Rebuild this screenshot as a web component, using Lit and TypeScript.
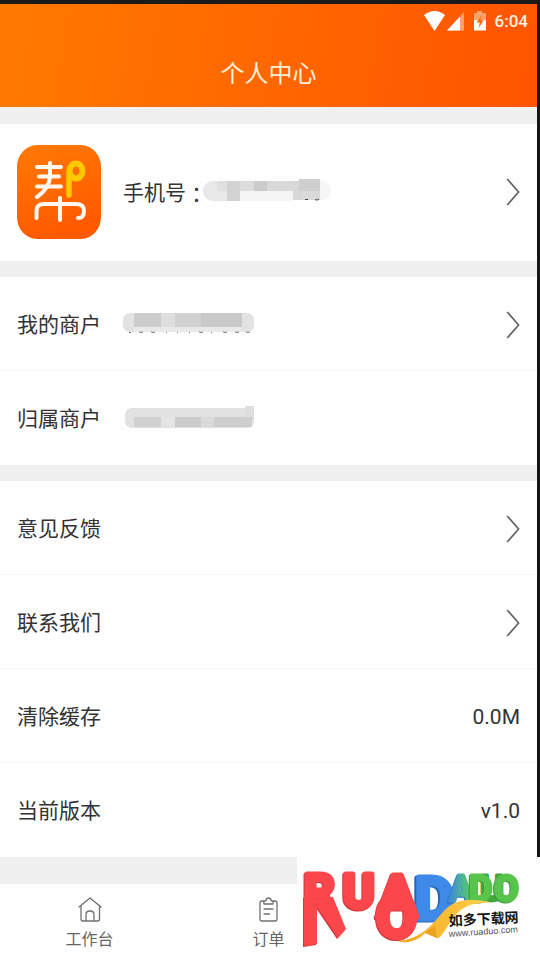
import { LitElement, html, css, svg, nothing } from "lit";
import { customElement } from "lit/decorators.js";

const chevron = html`<svg class="chevron" viewBox="0 0 14 28" width="14" height="28" aria-hidden="true">
  <path d="M1.2 1L12.6 14L1.2 27" fill="none" stroke="#666" stroke-width="1.7" />
</svg>`;

/** [x, y, width, height, grey] */
type Block = [number, number, number, number, string];

const blocks = (list: Block[]) =>
  list.map(([x, y, w, h, c]) => svg`<rect x=${x} y=${y} width=${w} height=${h} fill=${c} />`);

const phoneMask = html`<svg class="mask phone" viewBox="0 0 128 28" width="128" height="28" role="img" aria-label="已隐藏">
  <rect x="0" y="3" width="128" height="19" rx="9" fill="#f6f6f6" />
  <rect x="0" y="3" width="60" height="20" rx="10" fill="#e8e8e8" />
  ${blocks([
    [14, 3, 10, 10, "#dfdfdf"],
    [24, 3, 13, 20, "#d2d2d2"],
    [37, 3, 14, 10, "#dcdcdc"],
    [51, 3, 13, 10, "#cbcbcb"],
    [64, 3, 27, 10, "#d9d9d9"],
    [37, 13, 53, 10, "#f5f5f5"],
    [90, 3, 9, 19, "#d8d8d8"],
    [96, 1, 21, 12, "#cfcfcf"],
    [99, 13, 18, 9, "#dadada"],
  ])}
  <path d="M102 21.5h3M112 21.5q2 1.6 4 -0.5" fill="none" stroke="#444" />
</svg>`;

const mineMask = html`<svg class="mask" viewBox="0 0 132 24" width="132" height="24" role="img" aria-label="已隐藏">
  <rect x="0" y="1" width="131" height="19" rx="7" fill="#e2e2e2" />
  ${blocks([
    [11, 1, 27, 14, "#cdcdcd"],
    [38, 1, 14, 14, "#dedede"],
    [52, 1, 26, 14, "#d1d1d1"],
    [78, 1, 41, 14, "#c9c9c9"],
    [11, 15, 108, 5, "#e9e9e9"],
  ])}
  <path d="M6 20.5h2M16 20q2 1 4 0M28 20q2 1 4 0M43 20.5h1M54 20.5h1M66 20.5h1M76 20q2 1 4 0M88 20.5h1M100 20q2 1 4 0M112 20q2 1 4 0M123 20q2 1 4 0"
    fill="none" stroke="#777" />
</svg>`;

const ownerMask = html`<svg class="mask" viewBox="0 0 132 24" width="132" height="24" role="img" aria-label="已隐藏">
  <rect x="2" y="2" width="129" height="20" rx="7" fill="#e2e2e2" />
  ${blocks([
    [122, 0, 9, 14, "#dedede"],
    [11, 11, 27, 10, "#d0d0d0"],
    [38, 11, 14, 10, "#e4e4e4"],
    [52, 11, 26, 10, "#cccccc"],
    [78, 11, 13, 10, "#dadada"],
    [91, 11, 38, 10, "#cecece"],
  ])}
</svg>`;

@customElement("status-icons")
export class StatusIcons extends LitElement {
  static styles = css`
    :host {
      display: flex;
      align-items: center;
    }
    .time {
      margin-left: 8px;
      color: #fff0e0;
      font: 500 17px/20px Roboto, sans-serif;
    }
  `;
  render() {
    return html`
      <svg viewBox="0 0 64 22" width="64" height="22" aria-hidden="true">
        <path d="M1 5Q11.500-3 22 5L11.500 21Z" fill="#fff" />
        <path d="M24 20.500L41 2V20.500Z" fill="#ffa36b" />
        <path d="M24 20.500L37 6.500V20.500Z" fill="#fff" />
        <path d="M54 1h5v2h4v8H51V3h3z" fill="#ffa36b" />
        <path d="M51 10h12v10.500H51z" fill="#fff" />
        <path d="M58.500 5l-5 7.500h3.200l-1 5.500l5-7.800h-3.200z" fill="#ff6a14" />
      </svg>
      <span class="time">6:04</span>
    `;
  }
}

@customElement("site-mark")
export class SiteMark extends LitElement {
  static styles = css`
    :host {
      display: block;
      background: #fefefe;
    }
    svg {
      display: block;
    }
    text {
      font-family: Roboto, sans-serif;
      font-weight: 700;
      stroke-linejoin: round;
    }
    .red {
      fill: #fb474c;
      stroke: #fb474c;
      stroke-width: 5px;
      filter: drop-shadow(-1px 1px 0 #d2353b);
    }
    .red .limb {
      stroke: none;
    }
    .large {
      font-size: 60px;
    }
    .medium {
      font-size: 48px;
    }
    .small {
      font-size: 36px;
      stroke-width: 3px;
    }
    .blue {
      fill: #3f8ae8;
      stroke: #3f8ae8;
      stroke-width: 5px;
      filter: drop-shadow(-2px 1px 0 #2467bd);
    }
    .sea {
      fill: url(#sea);
      stroke: url(#sea);
      filter: drop-shadow(-1px 1px 0 #2f74bd);
    }
    .green {
      fill: #58c44c;
      stroke: #58c44c;
      filter: drop-shadow(-1px 1px 0 #3b9a37);
    }
    .shade {
      fill: #43a53b;
      stroke: #43a53b;
    }
    .name {
      font: 700 14px "Noto Sans CJK SC", sans-serif;
      fill: #161616;
    }
    .site {
      font: 400 9px "Liberation Sans", sans-serif;
      fill: #555;
    }
  `;

  render() {
    return html`<svg viewBox="0 0 243 103" width="243" height="103">
      <defs>
        <linearGradient id="sea"><stop offset="0" stop-color="#3f86e0" /><stop offset="0.600" stop-color="#4dbb8a" /><stop offset="1" stop-color="#58c552" /></linearGradient>
        <linearGradient id="gold"><stop offset="0" stop-color="#f5a623" /><stop offset="1" stop-color="#ffd24a" /></linearGradient>
      </defs>
      <g class="red">
        <path class="limb" d="M7 40H20V87L7 89Z" />
        <path class="limb" d="M20 42L36 40L49 72L41 81L20 50Z" />
        <text class="medium" x="7" y="51">R</text>
      </g>
      <g class="red"><text class="medium" x="46" y="51">U</text></g>
      <g class="blue"><text class="large" x="118" y="62">D</text></g>
      <g class="red">
        <text class="large" x="80" y="60">A</text>
        <text class="large" x="79" y="80">O</text>
      </g>
      <text class="small sea" x="152" y="44">A</text>
      <text class="small shade" x="183" y="44">U</text>
      <text class="small green" x="172" y="44">D</text>
      <text class="small green" x="197" y="44">O</text>
      <path d="M100 84C126 82 136 66 147 54C158 42 173 40 195 46C174 45 165 50 157 60C149 71 143 83 140 81L128 76C120 85 108 87 100 84Z" fill="url(#gold)" />
      <path d="M128 76L138 69L140 81Z" fill="#e9a11e" />
      <text class="name" transform="rotate(-3 152 70)" x="152" y="69">如多下载网</text>
      <text class="site" transform="rotate(-4 152 79)" x="152" y="80">www.ruaduo.com</text>
    </svg>`;
  }
}

interface Row {
  label: string;
  mask?: unknown;
  value?: string;
  link?: boolean;
}

const groups: Row[][] = [
  [{ label: "我的商户", mask: mineMask, link: true }, { label: "归属商户", mask: ownerMask }],
  [
    { label: "意见反馈", link: true },
    { label: "联系我们", link: true },
    { label: "清除缓存", value: "0.0M" },
    { label: "当前版本", value: "v1.0" },
  ],
];

@customElement("app-root")
export class AppRoot extends LitElement {
  static styles = css`
    :host {
      position: relative;
      display: flex;
      flex-direction: column;
      box-sizing: border-box;
      min-height: 100vh;
      border-top: 4px solid #1a1a1a;
      border-right: 3px solid #151515;
      background: #f0f0f0;
      color: #333;
      font: 400 21px/30px Roboto, "Noto Sans CJK SC", sans-serif;
    }
    .header {
      display: flex;
      flex-direction: column;
      height: 103px;
      background: linear-gradient(100deg, #ff7a00, #ff5400);
    }
    .status {
      display: flex;
      justify-content: flex-end;
      padding: 6px 9px 0 0;
    }
    .title {
      margin: 24px 0 0;
      color: #fff0dc;
      text-align: center;
      font-size: 24px;
      font-weight: 400;
      line-height: 36px;
    }
    .group {
      display: flex;
      flex-direction: column;
      margin-top: 16px;
      background: #fefefe;
    }
    .header + .group {
      margin-top: 17px;
    }
    .row {
      display: flex;
      align-items: center;
      gap: 22px;
      box-sizing: border-box;
      width: 100%;
      min-height: 94px;
      margin: 0;
      padding: 2px 17px 0;
      border: 0;
      border-bottom: 1px solid #f5f5f5;
      background: none;
      color: inherit;
      font: inherit;
      text-align: left;
    }
    .row:last-child {
      border-bottom-color: transparent;
    }
    .profile {
      min-height: 137px;
      padding-top: 0;
    }
    .phone-line {
      display: flex;
      align-items: center;
      padding-top: 2px;
    }
    .colon {
      font-family: "Noto Sans CJK TC", sans-serif;
    }
    .mask {
      display: block;
      margin-top: -2px;
    }
    .phone {
      margin-left: -4px;
    }
    .chevron,
    .value {
      margin-left: auto;
    }
    .logo {
      display: block;
    }
    .tabs {
      display: grid;
      grid-template-columns: repeat(3, 1fr);
      flex: 1;
      margin-top: 27px;
      background: #fefefe;
    }
    .tab {
      display: flex;
      flex-direction: column;
      align-items: center;
      gap: 6px;
      padding: 12px 0 7px;
      color: #666;
      font-size: 16px;
      line-height: 24px;
      text-decoration: none;
    }
    .tab svg {
      fill: none;
      stroke: #707070;
      stroke-width: 1.3;
      stroke-linejoin: round;
      stroke-linecap: round;
    }
    .corner {
      position: absolute;
      right: -3px;
      bottom: 0;
    }
  `;

  private row(r: Row) {
    const body = html`<span>${r.label}</span>${r.mask ?? nothing}${r.value
        ? html`<span class="value">${r.value}</span>`
        : nothing}${r.link ? chevron : nothing}`;
    return r.link ? html`<button class="row" type="button">${body}</button>` : html`<div class="row">${body}</div>`;
  }

  render() {
    return html`
      <header class="header">
        <div class="status"><status-icons></status-icons></div>
        <h1 class="title">个人中心</h1>
      </header>
      <section class="group">
        <button class="row profile" type="button">
          <svg class="logo" viewBox="0 0 84 94" width="84" height="94" aria-hidden="true">
            <defs>
              <linearGradient id="tile" x1="0" y1="0" x2="0.300" y2="1"><stop offset="0" stop-color="#ff7a04" /><stop offset="1" stop-color="#ff5a00" /></linearGradient>
            </defs>
            <rect width="84" height="94" rx="20" ry="22" fill="url(#tile)" />
            <g fill="none" stroke="#fff8f0" stroke-width="4" stroke-linecap="round" stroke-linejoin="round">
              <path d="M20 22H44M22 31.500H42M20 41.500H44" />
              <path d="M33 18V31C33 40 27 47 20 52" />
              <path d="M19.500 73V66Q19.500 59 27 59H59Q67 59 67 66Q67 73 61 73" />
              <path d="M43 53V75" />
            </g>
            <path d="M52 50V27" stroke="#ffc800" stroke-width="5.500" stroke-linecap="round" />
            <ellipse cx="59" cy="26" rx="6.500" ry="7.500" fill="none" stroke="#ffc800" stroke-width="6" />
          </svg>
          <span class="phone-line"><span>手机号</span><span class="colon">：</span>${phoneMask}</span>
          ${chevron}
        </button>
      </section>
      ${groups.map((g) => html`<section class="group">${g.map((r) => this.row(r))}</section>`)}
      <nav class="tabs">
        <a class="tab" href="#work">
          <svg viewBox="0 0 24 26" width="24" height="26" aria-hidden="true">
            <path d="M1 11L12 2L23 11M3 9.500V23Q3 25 5 25H19.500Q21.500 25 21.500 23V9.500M8 25V18.500Q8 15 12 15Q16 15 16 18.500V25" />
          </svg>
          <span>工作台</span>
        </a>
        <a class="tab" href="#orders">
          <svg viewBox="0 0 24 26" width="24" height="26" aria-hidden="true">
            <path d="M7 5H5Q3 5 3 7V23Q3 25 5 25H18Q20 25 20 23V7Q20 5 18 5H16M7 8Q6 5 9 4.500Q9 2 11.500 2Q14 2 14 4.500Q17 5 16 8ZM7 13H16M7 18H12.500" />
          </svg>
          <span>订单</span>
        </a>
      </nav>
      <site-mark class="corner"></site-mark>
    `;
  }
}
